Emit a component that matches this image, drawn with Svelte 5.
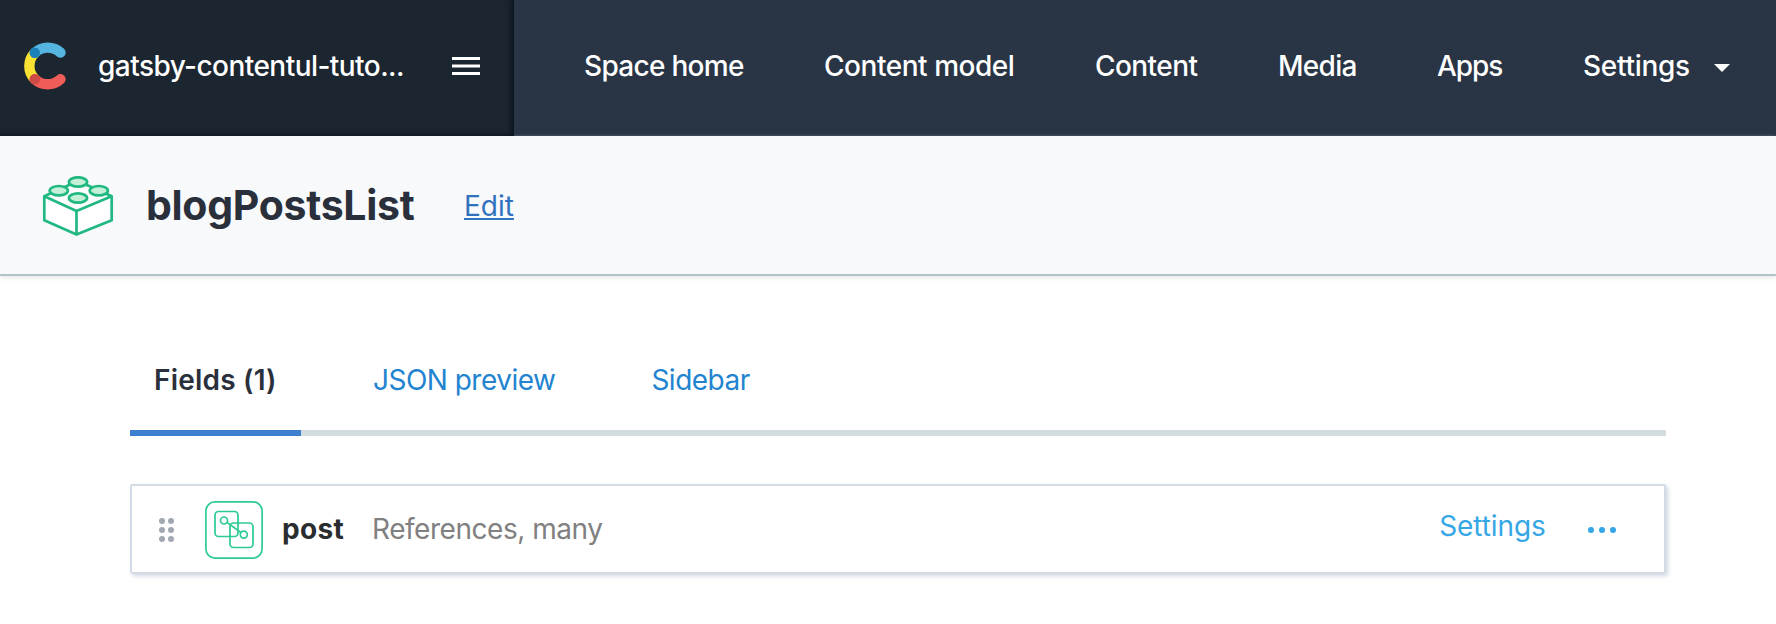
<script>
  const nav = [
    { label: 'Space home', width: 160, tracking: -0.7 },
    { label: 'Content model', width: 191, tracking: -0.46 },
    { label: 'Content', width: 103, tracking: -0.57 },
    { label: 'Media', width: 79, tracking: -0.7 },
    { label: 'Apps', width: 66, tracking: -1.1 },
    { label: 'Settings', width: 107, tracking: -0.28 }
  ];
  const dots = [0, 1, 2, 3, 4, 5];
</script>

<header class="topbar">
  <div class="space">
    <svg class="logo" width="42" height="48" viewBox="0 0 42 48" fill="none" stroke-width="10.4" stroke-linecap="round">
      <path d="M10.8 10.8A18.7 18.7 0 0 0 10.8 37.2" stroke="#fae232" />
      <path d="M10.8 10.8A18.8 18.8 0 0 1 36.5 10.6" stroke="#56b5e0" />
      <path d="M10.8 37.2A18.8 18.8 0 0 0 36.5 37.2" stroke="#f05c57" />
      <circle cx="10.8" cy="10.8" r="5.2" fill="#1a82b8" />
      <circle cx="10.8" cy="37.2" r="5.2" fill="#cf4b45" />
    </svg>
    <span class="space-name">gatsby-contentul-tuto...</span>
    <svg class="burger" width="28" height="18" viewBox="0 0 28 18" fill="#fff">
      <rect width="28" height="3" /><rect y="7.5" width="28" height="3" /><rect y="15" width="28" height="3" />
    </svg>
  </div>
  <nav>
    {#each nav as item}
      <a style="width:{item.width}px; letter-spacing:{item.tracking}px">{item.label}</a>
    {/each}
    <svg class="caret" width="16" height="8" viewBox="0 0 16 8"><path d="M0 0H16L8 8Z" fill="#fff" /></svg>
  </nav>
</header>

<section class="heading">
  <svg class="brick" width="72" height="62" viewBox="0 0 72 62" fill="none" stroke="#21b882" stroke-width="2.7" stroke-linejoin="round">
    <path d="M2.3 20.3L34.5 35L69.7 20.3V44.2L34.5 58.6L2.3 44.2Z" fill="#fff" stroke="none" />
    <path d="M2.3 20.3L36 5L69.7 20.3L34.5 35Z" fill="#fff" />
    <path d="M2.3 20.3V44.2L34.5 58.6L69.7 44.2V20.3M34.5 35V58.6" />
    <g fill="#c3f0d7">
      <ellipse cx="36" cy="6" rx="9.1" ry="4.7" />
      <ellipse cx="16.8" cy="14.7" rx="9.1" ry="4.7" />
      <ellipse cx="56.8" cy="14.7" rx="9.1" ry="4.7" />
      <ellipse cx="36" cy="22" rx="9.1" ry="4.7" />
    </g>
  </svg>
  <h1>blogPostsList</h1>
  <a class="edit">Edit</a>
</section>

<main>
  <div class="tabs">
    <div class="tab active">Fields (1)</div>
    <div class="tab json">JSON preview</div>
    <div class="tab side">Sidebar</div>
  </div>
  <div class="field">
    <div class="handle">{#each dots as _}<i></i>{/each}</div>
    <svg class="type" width="58" height="58" viewBox="0 0 58 58" fill="none" stroke="#2dcb92" stroke-width="1.7">
      <rect x=".9" y=".9" width="56.2" height="56.2" rx="9" />
      <rect x="10" y="10.5" width="23" height="25" rx="3.5" />
      <rect x="25" y="22" width="23" height="24.5" rx="3.5" />
      <circle cx="19" cy="19.5" r="3.5" />
      <circle cx="38.8" cy="33.6" r="3.5" />
      <path d="M22 21.4L35.9 31.5" />
    </svg>
    <strong>post</strong>
    <span class="kind">References, many</span>
    <a class="settings">Settings</a>
    <div class="more"><i></i><i></i><i></i></div>
  </div>
</main>

<style>
  :global(body) { background: #fff; font-family: Inter, sans-serif; font-size: 28px; line-height: 34px; }
  .topbar { display: flex; height: 136px; background: #293545; color: #fff; font-weight: 500; }
  .space { box-sizing: border-box; width: 514px; display: flex; align-items: center; padding: 0 0 4px 24px; background: #1b2630; box-shadow: inset -5px -3px 6px -3px #0a111a; }
  .logo { flex: none; }
  .space-name { width: 313px; margin-left: 32px; letter-spacing: -.55px; white-space: nowrap; }
  .burger { margin-left: 41px; }
  nav { flex: 1; display: flex; align-items: center; gap: 80px; padding: 0 0 4px 70px; white-space: nowrap; }
  nav a { flex: none; }
  .caret { margin: 4px 0 0 -56px; }
  .heading { box-sizing: border-box; height: 140px; display: flex; align-items: center; padding: 0 0 0 41.5px; background: #f7f9fb; border-bottom: 2px solid #b4c3ca; box-shadow: 0 2px 4px #e8e8e8; }
  .brick { margin-top: 4px; }
  h1 { width: 275px; margin: 0 0 0 32.5px; font-size: 41px; line-height: 50px; font-weight: 700; letter-spacing: -.3px; color: #2a303b; }
  .edit { margin: 2px 0 0 43px; color: #3072be; text-decoration: underline; text-decoration-thickness: 2px; text-underline-offset: 2px; text-decoration-skip-ink: none; }
  main { padding: 72px 110px 50px 130px; }
  .tabs { box-sizing: border-box; height: 88px; display: flex; border-bottom: 6px solid #d3dce0; }
  .tab { box-sizing: border-box; height: 88px; padding-top: 15px; color: #2284d0; white-space: nowrap; }
  .active { width: 171px; padding-left: 24px; border-bottom: 6px solid #3c80cf; font-weight: 600; letter-spacing: .2px; color: #2a303b; }
  .json { width: 278px; padding-left: 72px; letter-spacing: -.52px; }
  .side { padding-left: 72.4px; letter-spacing: -.5px; }
  .field { box-sizing: border-box; height: 90px; margin-top: 48px; display: flex; align-items: center; border: 2px solid #d3dce6; border-radius: 2px; box-shadow: 2px 2px 4px #cfd6df; }
  .handle { display: grid; grid-template-columns: 6px 6px; gap: 3px; margin-left: 26.5px; padding-top: 1px; }
  .handle i { width: 6px; height: 6px; border-radius: 50%; background: #a1a8b2; }
  .type { margin: 2px 0 0 31.5px; }
  strong { width: 90px; margin-left: 19px; font-weight: 700; letter-spacing: .3px; color: #2a2d30; }
  .kind { flex: 1; letter-spacing: -.46px; color: #808080; }
  .settings { width: 108px; letter-spacing: -.08px; color: #36a7e6; margin-bottom: 6px; }
  .more { display: flex; gap: 5.2px; margin: 2px 48.5px 0 40.5px; }
  .more i { width: 5.8px; height: 5.8px; border-radius: 50%; background: #36a7e6; }
</style>
